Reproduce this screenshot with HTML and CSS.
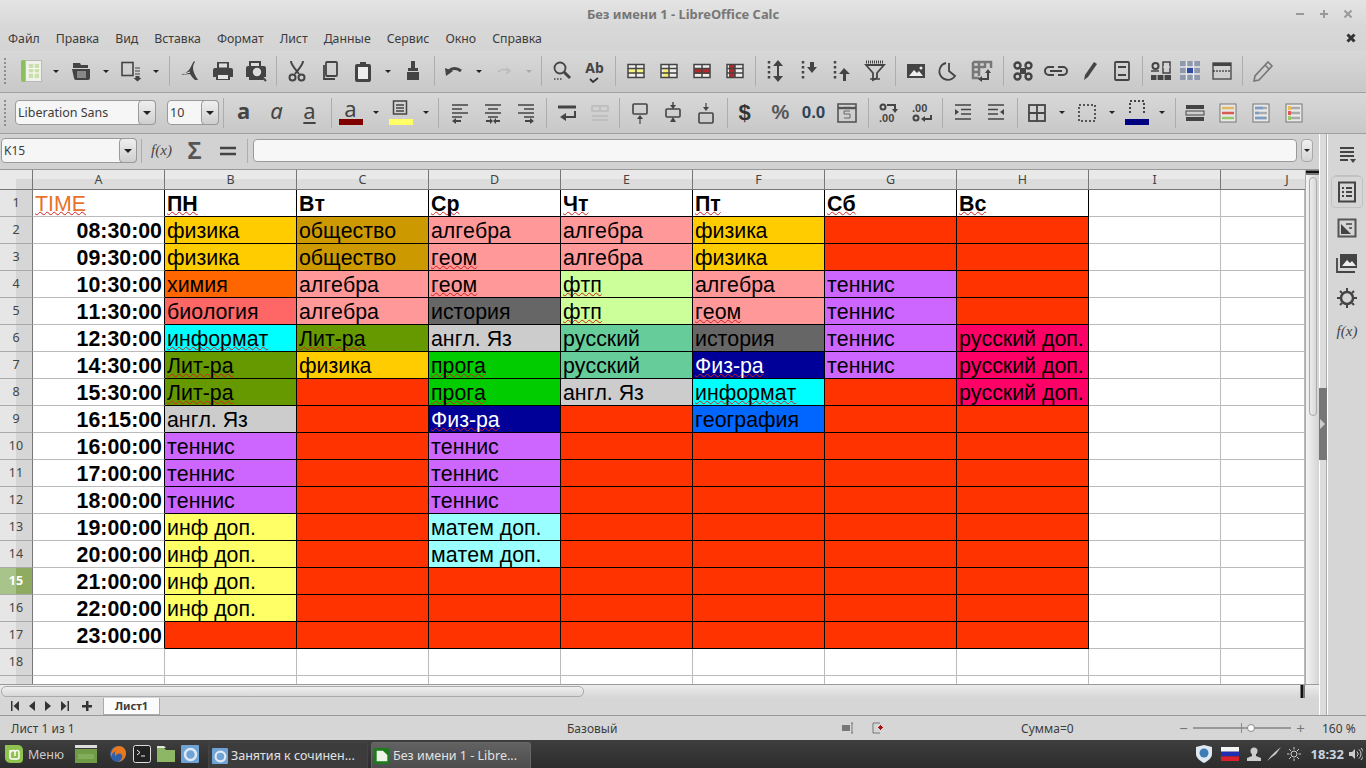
FILE: index.html
```html
<!DOCTYPE html>
<html lang="ru">
<head>
    <meta charset="UTF-8">
    <title>Без имени 1 - LibreOffice Calc</title>
    <link rel="stylesheet" href="styles.css">
</head>
<body>
    <div class="titlebar">
        <span class="title">Без имени 1 - LibreOffice Calc</span>
        <div class="winbtns">
            <svg class="wb" viewBox="0 0 10 10"><path d="M1 5h8"/></svg>
            <svg class="wb" viewBox="0 0 10 10"><path d="M1 5h8M5 1v8"/></svg>
            <svg class="wb" viewBox="0 0 10 10"><path d="M1.5 1.5l7 7M8.5 1.5l-7 7"/></svg>
        </div>
    </div>

    <div class="menubar">
        <span>Файл</span><span>Правка</span><span>Вид</span><span>Вставка</span><span>Формат</span><span>Лист</span><span>Данные</span><span>Сервис</span><span>Окно</span><span>Справка</span>
        <svg class="doc-close" viewBox="0 0 10 10"><path d="M1.5 1.5l7 7M8.5 1.5l-7 7"/></svg>
    </div>

    <!-- standard toolbar -->
    <div class="toolbar">
        <i class="grip"></i>
        <b class="b"><svg class="ic" viewBox="0 0 22 22"><path d="M1 2a2 2 0 0 1 2-2h5v22H3a2 2 0 0 1-2-2z" fill="#8cc05c" stroke="none"/><rect x="5.5" y=".5" width="16" height="21" fill="#f1f1ec" stroke="#b9b9b9" stroke-width="1"/><rect x="9" y="4" width="10" height="14" fill="#c9e0ab" stroke="none"/><path d="M9 8.5h10M9 13h10M14 4v14" stroke="#fff" stroke-width="1"/></svg></b>
        <b class="dd"></b>
        <b class="b"><svg class="ic" viewBox="0 0 22 22"><path class="f" d="M3 3h7l1 2h7v3H3z"/><path class="f" d="M2 9h18v9a2 2 0 0 1-2 2H6a2 2 0 0 1-2-2z"/><rect x="7" y="11" width="9" height="7" fill="#888" stroke="none"/></svg></b>
        <b class="dd"></b>
        <b class="b"><svg class="ic" viewBox="0 0 22 22"><rect x="2" y="2.500" width="11" height="13" stroke-width="1.600"/><path d="M15 8h5M15 11h5M15 14h5" stroke-width="1.200"/><path class="f" d="M15.500 16h4v2h2l-4 3.500-4-3.500h2z"/></svg></b>
        <b class="dd"></b>
        <i class="s l5"></i>
        <b class="b"><svg class="ic" viewBox="0 0 22 22"><path class="f" d="M15 1l1 1c-3 4-3 9 3 18h-3c-2-2-3-3-5-6l-9 1c3-1 6-3 8-5 2-3 3-6 5-9z"/><path d="M11 12l-6 2" stroke="#ddd" stroke-width="1"/></svg></b>
        <b class="b"><svg class="ic" viewBox="0 0 22 22"><path class="f" d="M5 2h12v6H5z"/><rect x="7" y="3.500" width="8" height="4" fill="#ddd" stroke="none"/><path class="f" d="M3 8h16a2 2 0 0 1 2 2v7h-3v3H4v-3H1v-7a2 2 0 0 1 2-2z"/><rect x="6" y="15" width="10" height="4" fill="#e5e5e5" stroke="none"/></svg></b>
        <b class="b"><svg class="ic" viewBox="0 0 22 22"><path class="f" d="M4 1h12v5h3a2 2 0 0 1 2 2v9h-3v3H4v-3H1V8a2 2 0 0 1 2-2h1z"/><rect x="6" y="3" width="8" height="3" fill="#ddd" stroke="none"/><circle cx="12" cy="12" r="5" fill="#ddd" stroke="#444" stroke-width="1.600"/><path d="M16 16l5 5" stroke-width="2"/></svg></b>
        <i class="s"></i>
        <b class="b"><svg class="ic" viewBox="0 0 22 22"><path d="M5 1c0 4 5 9 8 13M17 1c0 4-5 9-8 13" stroke-width="2"/><circle cx="6.500" cy="17.500" r="3" stroke-width="2"/><circle cx="15.500" cy="17.500" r="3" stroke-width="2"/></svg></b>
        <b class="b"><svg class="ic" viewBox="0 0 22 22"><rect x="7" y="2" width="11" height="14" rx="1" stroke-width="1.800"/><path d="M5 5v14h11" stroke-width="1.800"/></svg></b>
        <b class="b"><svg class="ic" viewBox="0 0 22 22"><path class="f" d="M5 4h3V2h6v2h3a2 2 0 0 1 2 2v14a2 2 0 0 1-2 2H5a2 2 0 0 1-2-2V6a2 2 0 0 1 2-2z"/><rect x="6" y="7" width="10" height="12" fill="#eee" stroke="none"/></svg></b>
        <b class="dd"></b>
        <b class="b"><svg class="ic" viewBox="0 0 22 22"><path class="f" d="M9 1h4v7h3v3H6V8h3zM5 12h12v8H5z"/></svg></b>
        <i class="s l5 r2"></i>
        <b class="b"><svg class="ic" viewBox="0 0 22 22"><path d="M5 13c2-5 8-6 13-2" stroke-width="3"/><path class="f" d="M2 8l8 3-7 5z"/></svg></b>
        <b class="dd"></b>
        <b class="b"><svg class="ic off" viewBox="0 0 22 22"><path d="M5 12c3-3 7-3 10-1M13 8l4 3-4 3" stroke-width="1.500"/></svg></b>
        <b class="dd dd-off"></b>
        <i class="s"></i>
        <b class="b"><svg class="ic" viewBox="0 0 22 22"><circle cx="9" cy="8" r="5.500" stroke-width="1.800"/><path d="M13 12l6 6" stroke-width="3"/><path d="M3 19h8" stroke-width="1.500" stroke-dasharray="1.500 1.500"/></svg></b>
        <b class="b tx"><span class="ab">Ab</span><svg class="check" viewBox="0 0 10 6"><path d="M1 2l3 3 5-4"/></svg></b>
        <i class="s"></i>
        <b class="b"><svg class="ic" viewBox="0 0 22 22"><rect x="3" y="4" width="16" height="14" fill="#eee" stroke="none"/><rect x="3" y="8" width="16" height="6" fill="#f7f28a" stroke="none"/><path d="M3 4.500h16v13H3zM3 8.500h16M3 13h16M11 4.500v13" stroke-width="1.500"/></svg></b>
        <b class="b"><svg class="ic" viewBox="0 0 22 22"><rect x="3" y="4" width="16" height="14" fill="#eee" stroke="none"/><rect x="5" y="8" width="6" height="9" fill="#f5ee6a" stroke="none"/><path d="M3 4.500h16v13H3zM3 8.500h16M3 13h16M11 4.500v13" stroke-width="1.500"/></svg></b>
        <b class="b"><svg class="ic" viewBox="0 0 22 22"><rect x="3" y="4" width="16" height="14" fill="#eee" stroke="none"/><rect x="3" y="8" width="16" height="6" fill="#b02a2a" stroke="none"/><path d="M3 4.500h16v13H3zM3 8.500h16M3 13h16M11 4.500v13" stroke-width="1.500"/></svg></b>
        <b class="b"><svg class="ic" viewBox="0 0 22 22"><rect x="3" y="4" width="16" height="14" fill="#eee" stroke="none"/><rect x="5" y="5" width="6" height="13" fill="#b02a2a" stroke="none"/><path d="M3 4.500h16v13H3zM3 8.500h16M3 13h16M11 4.500v13" stroke-width="1.500"/></svg></b>
        <i class="s"></i>
        <b class="b"><svg class="ic" viewBox="0 0 22 22"><path d="M4 1v20" stroke-width="2.500" stroke-dasharray="2.500 2.500"/><path d="M13 5v12" stroke-width="2"/><path class="f" d="M13 0l5 6H8zM13 22l5-6H8z"/></svg></b>
        <b class="b"><svg class="ic" viewBox="0 0 22 22"><path d="M5 1v20" stroke-width="2.500" stroke-dasharray="2.500 2.500"/><path class="f" d="M12 2h4v5h3l-5 6-5-6h3z"/></svg></b>
        <b class="b"><svg class="ic" viewBox="0 0 22 22"><path d="M4 1v20" stroke-width="2.500" stroke-dasharray="2.500 2.500"/><path class="f" d="M13 8l6 6h-4v7h-3v-7H8z"/></svg></b>
        <b class="b"><svg class="ic" viewBox="0 0 22 22"><path d="M2 2h18" stroke-width="3" stroke-dasharray="1 1"/><path d="M2 5h18L13 13v5l-4 2v-7z" stroke-width="1.800"/><path d="M6 19h10" stroke-width="1.500"/></svg></b>
        <i class="s"></i>
        <b class="b"><svg class="ic" viewBox="0 0 22 22"><rect x="2" y="4" width="18" height="14" class="f"/><path d="M4 16l5-6 3 3 2-2 4 5z" fill="#eee" stroke="none"/><circle cx="16" cy="8" r="1.500" fill="#eee" stroke="none"/></svg></b>
        <b class="b"><svg class="ic" viewBox="0 0 22 22"><path d="M11 3v8l6 5A8.500 8.500 0 1 1 8 3" stroke-width="1.800"/></svg></b>
        <b class="b"><svg class="ic" viewBox="0 0 22 22"><path d="M2 2h18v6M2 2v16h6M2 7h12M2 12h6M8 2v14M14 2v6" stroke-width="2.500" stroke="#777"/><path d="M17 9l-3 4h2v5h-5v-2l-4 3 4 3v-2h7v-7h2z" class="f"/></svg></b>
        <i class="s l5 r2"></i>
        <b class="b"><svg class="ic" viewBox="0 0 22 22"><circle cx="5.500" cy="5.500" r="3" stroke-width="2.400"/><circle cx="16.500" cy="5.500" r="3" stroke-width="2.400"/><circle cx="5.500" cy="16.500" r="3" stroke-width="2.400"/><circle cx="16.500" cy="16.500" r="3" stroke-width="2.400"/><path class="f" d="M8 8h6v6H8z"/></svg></b>
        <b class="b"><svg class="ic" viewBox="0 0 22 22"><path d="M9 7H4a4 4 0 0 0 0 8h5M13 7h5a4 4 0 0 1 0 8h-5M5 11h12" stroke-width="2"/></svg></b>
        <b class="b"><svg class="ic" viewBox="0 0 22 22"><path class="f" d="M16 2l3 2-9 13-4 3 1-5z"/></svg></b>
        <b class="b"><svg class="ic" viewBox="0 0 22 22"><rect x="4" y="2" width="14" height="18" rx="1" stroke-width="1.800"/><path d="M7 7h8M7 15h8" stroke-width="1.800"/></svg></b>
        <i class="s"></i>
        <b class="b b-n"><svg class="ic" viewBox="0 0 22 22"><circle cx="5.500" cy="6" r="3" stroke-width="2"/><path d="M1 11h8M13 2h7v11h-7z" stroke-width="1.500"/><path d="M1 15h20v5H1z" class="f"/><path d="M7 15v5M14 15v5M13 7h7" stroke="#ddd" stroke-width="1"/></svg></b>
        <b class="b b-m"><svg class="ic" viewBox="0 0 22 22"><rect x="1" y="1" width="20" height="19" fill="#8f98ad" stroke="none"/><path d="M1 7h20M1 14h20M7.500 1v19M14.500 1v19" stroke="#e8e8e8" stroke-width="1.500"/><rect x="8" y="8" width="6" height="5" fill="#2f49a8" stroke="none"/></svg></b>
        <b class="b"><svg class="ic" viewBox="0 0 22 22"><rect x="2" y="3" width="18" height="16" stroke="#555" stroke-width="1.500"/><rect x="2" y="3" width="18" height="3" class="f"/><path d="M2 11h18" stroke="#111" stroke-width="1.200" stroke-dasharray="2 1"/></svg></b>
        <i class="s"></i>
        <b class="b"><svg class="ic" viewBox="0 0 22 22"><path d="M16 2l4 4L7 20l-5 1 1-5zM13 5l4 4" stroke="#777" stroke-width="1.600"/></svg></b>
    </div>

    <!-- formatting toolbar -->
    <div class="toolbar">
        <i class="grip grip2"></i>
        <div class="combo combo-font"><span class="combo-val">Liberation Sans</span><b class="combo-btn"></b></div>
        <div class="combo combo-size"><span class="combo-val">10</span><b class="combo-btn"></b></div>
        <i class="s"></i>
        <b class="b tx"><span class="ltr ltr-b">a</span></b>
        <b class="b tx"><span class="ltr ltr-i">a</span></b>
        <b class="b tx"><span class="ltr ltr-u">a</span></b>
        <i class="s l5 r2"></i>
        <b class="b tx bar"><span class="ltr ltr-c">a</span><i class="swatch sw-red"></i></b>
        <b class="dd"></b>
        <b class="b bar"><svg class="ic ic-bg" viewBox="0 0 18 18"><rect x="1.500" y="1" width="13" height="13" stroke-width="1.500"/><path d="M4 5h8M4 8h8M4 11h8" stroke-width="1.500"/></svg><i class="swatch sw-yellow"></i></b>
        <b class="dd"></b>
        <i class="s r4"></i>
        <b class="b"><svg class="ic" viewBox="0 0 22 22"><path d="M3 3h16M3 7h10M3 11h16M3 15h10" stroke-width="1.600"/><path class="f" d="M3 19l4-3v2h5v2H7v2z"/></svg></b>
        <b class="b"><svg class="ic" viewBox="0 0 22 22"><path d="M3 3h16M6 7h10M3 11h16M6 15h10" stroke-width="1.600"/><path class="f" d="M11 19l-3-3v2H4v2h4v2zM11 19l3-3v2h4v2h-4v2z"/></svg></b>
        <b class="b"><svg class="ic" viewBox="0 0 22 22"><path d="M3 3h16M9 7h10M3 11h16M9 15h10" stroke-width="1.600"/><path class="f" d="M19 19l-4-3v2h-5v2h5v2z"/></svg></b>
        <i class="s"></i>
        <b class="b"><svg class="ic" viewBox="0 0 22 22"><path d="M2 5h18" stroke-width="3"/><path d="M19 9v6H9" stroke-width="2"/><path class="f" d="M10 11v8l-6-4z"/></svg></b>
        <b class="b"><svg class="ic off" viewBox="0 0 22 22"><path d="M3 4h16v5H3zM3 14h16M3 18h16M11 4v5" stroke-width="1.500"/></svg></b>
        <i class="s l3"></i>
        <b class="b"><svg class="ic" viewBox="0 0 22 22"><rect x="4" y="2" width="14" height="10" rx="1" stroke-width="1.600"/><path d="M11 15v7" stroke-width="1.200"/><path class="f" d="M11 13l3 4H8z"/></svg></b>
        <b class="b"><svg class="ic" viewBox="0 0 22 22"><rect x="4" y="7" width="14" height="8" rx="1" stroke-width="1.600"/><path class="f" d="M11 7L8 3h6zM11 15l3 5H8z"/><path d="M11 0v4" stroke-width="1.400"/></svg></b>
        <b class="b"><svg class="ic" viewBox="0 0 22 22"><rect x="4" y="11" width="14" height="10" rx="1" stroke-width="1.600"/><path d="M11 1v6" stroke-width="1.200"/><path class="f" d="M11 9L8 5h6z"/></svg></b>
        <i class="s l5"></i>
        <b class="b tx nudge"><span class="num dollar">$</span></b>
        <b class="b tx"><span class="num pct">%</span></b>
        <b class="b tx"><span class="num dec">0.0</span></b>
        <b class="b"><svg class="ic" viewBox="0 0 22 22"><rect x="2" y="2" width="18" height="18" stroke="#555" stroke-width="1.600"/><path d="M2 6h18" stroke="#555" stroke-width="2.500"/><path d="M5 4h2M15 4h2" stroke="#ddd" stroke-width="1"/><path d="M14 9h-6v3h6v4H8" stroke="#666" stroke-width="1"/></svg></b>
        <i class="s l5"></i>
        <b class="b"><svg class="ic" viewBox="0 0 22 22"><circle cx="5" cy="5" r="2.500" stroke-width="2"/><path d="M9 3h8v5" stroke-width="2"/><path class="f" d="M17 11l-3-4h6z"/><text class="mini" x="1" y="20">.00</text></svg></b>
        <b class="b"><svg class="ic" viewBox="0 0 22 22"><text class="mini" x="1" y="10">.00</text><circle cx="5" cy="16" r="2.500" stroke-width="2"/><path d="M20 13v4h-8" stroke-width="2"/><path class="f" d="M10 17l4-3v6z"/></svg></b>
        <i class="s"></i>
        <b class="b"><svg class="ic" viewBox="0 0 22 22"><path d="M3 3h16M9 7.500h10M9 12h10M3 17h16" stroke-width="1.600"/><path class="f" d="M7 10l-4-3v6z"/></svg></b>
        <b class="b"><svg class="ic" viewBox="0 0 22 22"><path d="M3 3h16M3 7.500h10M3 12h10M3 17h16" stroke-width="1.600"/><path class="f" d="M15 10l4-3v6z"/></svg></b>
        <i class="s l5 r2"></i>
        <b class="b"><svg class="ic" viewBox="0 0 22 22"><rect x="3" y="3" width="16" height="16" stroke-width="1.800"/><path d="M3 11h16M11 3v16" stroke-width="1.800"/></svg></b>
        <b class="dd"></b>
        <b class="b"><svg class="ic" viewBox="0 0 22 22"><rect x="3" y="3" width="16" height="16" stroke="#555" stroke-width="2" stroke-dasharray="2 2"/></svg></b>
        <b class="dd"></b>
        <b class="b bar"><svg class="ic ic-bg" viewBox="0 0 18 18"><path d="M2 13V1h14v12" stroke="#444" stroke-width="2" stroke-dasharray="2 2"/></svg><i class="swatch sw-navy"></i></b>
        <b class="dd"></b>
        <i class="s l5 r2"></i>
        <b class="b"><svg class="ic" viewBox="0 0 22 22"><rect x="2" y="3" width="18" height="4" class="f"/><rect x="2" y="9" width="18" height="4" stroke-width="1"/><rect x="2" y="15" width="18" height="4" class="f"/></svg></b>
        <b class="b"><svg class="ic" viewBox="0 0 22 22"><rect x="3" y="2" width="16" height="18" fill="#e8e8e8" stroke="#777" stroke-width="1"/><path d="M5 6h12" stroke="#e2b860" stroke-width="2.500"/><path d="M5 11h12" stroke="#d85a50" stroke-width="2.500"/><path d="M5 16h12" stroke="#98c868" stroke-width="2.500"/></svg></b>
        <b class="b"><svg class="ic" viewBox="0 0 22 22"><rect x="3" y="2" width="16" height="18" fill="#e8e8e8" stroke="#777" stroke-width="1"/><path d="M5 6h12M5 11h12M5 16h12" stroke="#aaa" stroke-width="2.500"/><path d="M5 6h8M5 11h4M5 16h11" stroke="#7b9cc4" stroke-width="2.500"/></svg></b>
        <b class="b"><svg class="ic" viewBox="0 0 22 22"><rect x="3" y="2" width="16" height="18" fill="#e8e8e8" stroke="#777" stroke-width="1"/><path d="M8 6h9M8 11h9M8 16h9" stroke="#aaa" stroke-width="2.500"/><path d="M5 4h3v4H5z" fill="#eebb55" stroke="none"/><path d="M5 9h3v4H5z" fill="#d85a50" stroke="none"/><path d="M5 14h3v4H5z" fill="#98c868" stroke="none"/></svg></b>
    </div>

    <div class="main">
        <div class="leftcol">
            <div class="formulabar">
                <div class="combo combo-name"><span class="combo-val">K15</span><b class="combo-btn"></b></div>
                <i class="s s-name"></i>
                <b class="b tx"><span class="fx">f(x)</span></b>
                <b class="b tx"><span class="sigma">Σ</span></b>
                <b class="b tx"><svg class="ic" viewBox="0 0 22 22"><path d="M3 8h16M3 14h16" stroke-width="2.500"/></svg></b>
                <i class="s s-fx"></i>
                <div class="formula-input"></div>
                <b class="formula-dd"></b>
            </div>

            <div class="gridrow">
                <div class="gridwrap">
                    <table class="sheet">
                        <colgroup>
                            <col class="c-hdr"><col class="c-w"><col class="c-w"><col class="c-w"><col class="c-w"><col class="c-w"><col class="c-w"><col class="c-w"><col class="c-w"><col class="c-w"><col class="c-j">
                        </colgroup>
                        <thead>
                            <tr><th class="corner"></th><th>A</th><th>B</th><th>C</th><th>D</th><th>E</th><th>F</th><th>G</th><th>H</th><th>I</th><th class="col-j">J</th></tr>
                        </thead>
                        <tbody>
                            <tr class="top"><th>1</th><td class="a time"><u>TIME</u></td><td class="h"><u>ПН</u></td><td class="h">Вт</td><td class="h"><u>Ср</u></td><td class="h"><u>Чт</u></td><td class="h"><u>Пт</u></td><td class="h"><u>Сб</u></td><td class="h last"><u>Вс</u></td><td></td><td></td></tr>
                            <tr><th>2</th><td class="a t">08:30:00</td><td class="c fiz">физика</td><td class="c obs">общество</td><td class="c alg">алгебра</td><td class="c alg">алгебра</td><td class="c fiz">физика</td><td class="c red"></td><td class="c red"></td><td></td><td></td></tr>
                            <tr><th>3</th><td class="a t">09:30:00</td><td class="c fiz">физика</td><td class="c obs">общество</td><td class="c alg"><u>геом</u></td><td class="c alg">алгебра</td><td class="c fiz">физика</td><td class="c red"></td><td class="c red"></td><td></td><td></td></tr>
                            <tr><th>4</th><td class="a t">10:30:00</td><td class="c him">химия</td><td class="c alg">алгебра</td><td class="c alg"><u>геом</u></td><td class="c ftp"><u>фтп</u></td><td class="c alg">алгебра</td><td class="c ten">теннис</td><td class="c red"></td><td></td><td></td></tr>
                            <tr><th>5</th><td class="a t">11:30:00</td><td class="c bio">биология</td><td class="c alg">алгебра</td><td class="c ist">история</td><td class="c ftp"><u>фтп</u></td><td class="c alg"><u>геом</u></td><td class="c ten">теннис</td><td class="c red"></td><td></td><td></td></tr>
                            <tr><th>6</th><td class="a t">12:30:00</td><td class="c inf"><u>информат</u></td><td class="c lit"><u>Лит-ра</u></td><td class="c eng">англ. Яз</td><td class="c rus">русский</td><td class="c ist">история</td><td class="c ten">теннис</td><td class="c rud">русский доп.</td><td></td><td></td></tr>
                            <tr><th>7</th><td class="a t">14:30:00</td><td class="c lit"><u>Лит-ра</u></td><td class="c fiz">физика</td><td class="c pro"><u>прога</u></td><td class="c rus">русский</td><td class="c phy"><u>Физ-ра</u></td><td class="c ten">теннис</td><td class="c rud">русский доп.</td><td></td><td></td></tr>
                            <tr><th>8</th><td class="a t">15:30:00</td><td class="c lit"><u>Лит-ра</u></td><td class="c red"></td><td class="c pro"><u>прога</u></td><td class="c eng">англ. Яз</td><td class="c inf"><u>информат</u></td><td class="c red"></td><td class="c rud">русский доп.</td><td></td><td></td></tr>
                            <tr><th>9</th><td class="a t">16:15:00</td><td class="c eng">англ. Яз</td><td class="c red"></td><td class="c phy"><u>Физ-ра</u></td><td class="c red"></td><td class="c geo">география</td><td class="c red"></td><td class="c red"></td><td></td><td></td></tr>
                            <tr><th>10</th><td class="a t">16:00:00</td><td class="c ten">теннис</td><td class="c red"></td><td class="c ten">теннис</td><td class="c red"></td><td class="c red"></td><td class="c red"></td><td class="c red"></td><td></td><td></td></tr>
                            <tr><th>11</th><td class="a t">17:00:00</td><td class="c ten">теннис</td><td class="c red"></td><td class="c ten">теннис</td><td class="c red"></td><td class="c red"></td><td class="c red"></td><td class="c red"></td><td></td><td></td></tr>
                            <tr><th>12</th><td class="a t">18:00:00</td><td class="c ten">теннис</td><td class="c red"></td><td class="c ten">теннис</td><td class="c red"></td><td class="c red"></td><td class="c red"></td><td class="c red"></td><td></td><td></td></tr>
                            <tr><th>13</th><td class="a t">19:00:00</td><td class="c idp">инф доп.</td><td class="c red"></td><td class="c mat">матем доп.</td><td class="c red"></td><td class="c red"></td><td class="c red"></td><td class="c red"></td><td></td><td></td></tr>
                            <tr><th>14</th><td class="a t">20:00:00</td><td class="c idp">инф доп.</td><td class="c red"></td><td class="c mat">матем доп.</td><td class="c red"></td><td class="c red"></td><td class="c red"></td><td class="c red"></td><td></td><td></td></tr>
                            <tr><th class="sel">15</th><td class="a t">21:00:00</td><td class="c idp">инф доп.</td><td class="c red"></td><td class="c red"></td><td class="c red"></td><td class="c red"></td><td class="c red"></td><td class="c red"></td><td></td><td></td></tr>
                            <tr><th>16</th><td class="a t">22:00:00</td><td class="c idp">инф доп.</td><td class="c red"></td><td class="c red"></td><td class="c red"></td><td class="c red"></td><td class="c red"></td><td class="c red"></td><td></td><td></td></tr>
                            <tr><th>17</th><td class="a t">23:00:00</td><td class="c red"></td><td class="c red"></td><td class="c red"></td><td class="c red"></td><td class="c red"></td><td class="c red"></td><td class="c red"></td><td></td><td></td></tr>
                            <tr><th>18</th><td></td><td></td><td></td><td></td><td></td><td></td><td></td><td></td><td></td><td></td></tr>
                            <tr><th></th><td></td><td></td><td></td><td></td><td></td><td></td><td></td><td></td><td></td><td></td></tr>
                        </tbody>
                    </table>
                </div>
                <div class="vscroll">
                    <div class="vhandle"></div>
                    <div class="vthumb"></div>
                </div>
            </div>

            <div class="hscroll">
                <div class="hthumb"></div>
                <div class="htrack"></div>
                <div class="hhandle"></div>
            </div>

            <div class="tabsbar">
                <div class="tabnav">
                    <svg class="nav" viewBox="0 0 10 10"><path d="M1 0h1.500v10H1zM9 0v10L3.500 5z"/></svg>
                    <svg class="nav" viewBox="0 0 10 10"><path d="M8 0v10L2 5z"/></svg>
                    <svg class="nav" viewBox="0 0 10 10"><path d="M2 0v10l6-5z"/></svg>
                    <svg class="nav" viewBox="0 0 10 10"><path d="M9 0H7.500v10H9zM1 0v10l5.500-5z"/></svg>
                    <svg class="nav nav-add" viewBox="0 0 10 10"><path d="M4 0h2.500v4H10v2.500H6.500V10H4V6.500H0V4h4z"/></svg>
                </div>
                <div class="tab">Лист1</div>
            </div>
        </div>

        <div class="splitter"><div class="split-grip"></div></div>

        <div class="sidebar">
            <svg class="ic side-ic" viewBox="0 0 22 22"><path d="M4 4h14M4 8h14M4 12h14M4 16h8" stroke-width="1.800"/><path class="f" d="M14 15h6l-3 4z"/></svg>
            <div class="side-sep"></div>
            <div class="side-active"><svg class="ic" viewBox="0 0 22 22"><rect x="3" y="1.500" width="16" height="19" stroke-width="2"/><path d="M6 7h2M10 7h6M6 11h2M10 11h6M6 15h2M10 15h6" stroke-width="1.800"/></svg></div>
            <svg class="ic side-ic" viewBox="0 0 22 22"><rect x="2.500" y="2.500" width="17" height="17" stroke="#555" stroke-width="2"/><path class="f" d="M5 7l10 10H5z"/><path d="M10 7h6M13 11h3" stroke-width="1.600"/></svg>
            <svg class="ic side-ic" viewBox="0 0 22 22"><path d="M1 6v14h18" stroke-width="1.800"/><rect x="4" y="2" width="17" height="14" class="f"/><path d="M6 14l5-6 3 3 2-2 4 5z" fill="#eee" stroke="none"/></svg>
            <svg class="ic side-ic" viewBox="0 0 22 22"><circle cx="11" cy="11" r="6" stroke-width="2.500"/><path d="M11 1v3M11 18v3M1 11h3M18 11h3M4 4l2 2M16 16l2 2M18 4l-2 2M4 18l2-2" stroke-width="2"/></svg>
            <span class="fx side-fx">f(x)</span>
        </div>
    </div>

    <div class="statusbar">
        <span class="st st-sheet">Лист 1 из 1</span>
        <span class="st st-style">Базовый</span>
        <span class="st st-icons">
            <svg class="st-ic" viewBox="0 0 12 12"><rect x="0" y="3" width="8" height="6" fill="#777"/><path d="M10 1v10M9 1h2M9 11h2" stroke="#777" fill="none"/></svg>
            <svg class="st-ic" viewBox="0 0 12 12"><path d="M8 1H1v10h7" stroke="#777" fill="none"/><path d="M6 5.500h5M8.500 3v5M7 4l3 3M10 4L7 7" stroke="#a11" fill="none"/></svg>
        </span>
        <span class="st st-sum">Сумма=0</span>
        <span class="st st-zoom">
            <i class="zm">−</i>
            <span class="slider"><i class="tick"></i><i class="knob"></i></span>
            <i class="zm">+</i>
        </span>
        <span class="st st-pct">160 %</span>
    </div>

    <div class="taskbar">
        <div class="mint">
            <svg class="tk" viewBox="0 0 20 20"><path d="M1 1h13a5 5 0 0 1 5 5v9a4 4 0 0 1-4 4H6a5 5 0 0 1-5-5z" fill="#8fc24f"/><path d="M6 6v7a2 2 0 0 0 2 2h5a2 2 0 0 0 2-2V8.500a2 2 0 0 0-4 0V12M11 8.500a2 2 0 0 0-4 0" stroke="#fff" stroke-width="1.500" fill="none"/></svg>
            <span>Меню</span>
        </div>
        <svg class="tk tk-desk" viewBox="0 0 22 18"><rect x="0" y="0" width="22" height="3" fill="#ddd"/><rect x="0" y="4" width="22" height="14" fill="#6f9c45"/><rect x="3" y="9" width="16" height="5" fill="#83ad5a"/></svg>
        <svg class="tk tk-q" viewBox="0 0 18 18"><circle cx="9" cy="9" r="8" fill="#2f5fa8"/><path d="M2 12C1 6 5 1 10 1c4 0 7 3 7 7 0 6-5 9-9 9 4-1 6-4 5-7-2-3-6-1-6 1-2-1-1-4 0-5-3 1-4 3-5 6z" fill="#e8791d"/></svg>
        <svg class="tk tk-q" viewBox="0 0 18 18"><rect x=".5" y=".5" width="17" height="17" rx="2" fill="#222" stroke="#ddd"/><path d="M4 5l3 2.500L4 10M8 11h4" stroke="#eee" fill="none"/></svg>
        <svg class="tk tk-q" viewBox="0 0 18 18"><path d="M0 3h7l2 2h9v12H0z" fill="#8db665"/><path d="M0 1h7l2 2H0z" fill="#dfe8d5"/></svg>
        <svg class="tk tk-q" viewBox="0 0 18 18"><rect width="18" height="18" rx="1" fill="#6fa3d6"/><circle cx="9.500" cy="9.500" r="5.500" fill="none" stroke="#dfe9f3" stroke-width="2.500"/></svg>
        <div class="task">
            <svg class="tk" viewBox="0 0 18 18"><rect width="18" height="18" rx="1" fill="#6fa3d6"/><circle cx="9.500" cy="9.500" r="5.500" fill="none" stroke="#dfe9f3" stroke-width="2.500"/></svg>
            <span>Занятия к сочинен...</span>
        </div>
        <div class="task task-on">
            <svg class="tk" viewBox="0 0 18 18"><rect width="18" height="18" rx="2" fill="#1d7a1d"/><path d="M3 3h7l5 5v7H3z" fill="#eef5e8"/></svg>
            <span>Без имени 1 - Libre...</span>
        </div>
        <div class="tray">
            <svg class="tk tk-shield" viewBox="0 0 16 18"><path d="M8 0l8 2v7c0 4-4 7-8 9-4-2-8-5-8-9V2z" fill="#dfe9f2"/><circle cx="8" cy="8" r="4.500" fill="#3e7cb8"/></svg>
            <svg class="tk tk-flag" viewBox="0 0 18 14"><rect width="18" height="4.700" fill="#f4f4f4"/><rect y="4.700" width="18" height="4.700" fill="#1f2fb0"/><rect y="9.400" width="18" height="4.600" fill="#d9202c"/></svg>
            <svg class="tk tk-user" viewBox="0 0 14 14"><circle cx="7" cy="4" r="3.500" fill="#ccc"/><path d="M5 7h4v2l5 2v3H0v-3l5-2z" fill="#ccc"/></svg>
            <svg class="tk tk-user" viewBox="0 0 14 14"><path d="M14 0L8 5 4 9l1 1 4-3zM4 9l-4 5 5-4" fill="#ccc"/></svg>
            <svg class="tk tk-user" viewBox="0 0 14 14"><circle cx="7" cy="7" r="3" fill="none" stroke="#ccc"/><path d="M7 0v2.500M7 11.500V14M0 7h2.500M11.500 7H14M2 2l2 2M10 10l2 2M12 2l-2 2M2 12l2-2" stroke="#ccc"/></svg>
            <span class="clock">18:32</span>
            <svg class="tk tk-vol" viewBox="0 0 14 14"><path d="M0 5h3l3-3v10L3 9H0z" fill="#ccc"/><path d="M8 4.500a3.500 3.500 0 0 1 0 5M10 2.500a6 6 0 0 1 0 9M12 1a8 8 0 0 1 0 12" stroke="#ccc" fill="none"/></svg>
        </div>
    </div>
</body>
</html>
```

FILE: styles.css
```css
* {
    box-sizing: border-box;
}
html, body {
    margin: 0;
    padding: 0;
}
body {
    width: 1366px;
    height: 768px;
    overflow: hidden;
    display: flex;
    flex-direction: column;
    font-family: "Noto Sans", sans-serif;
    font-size: 12px;
    color: #3c3c3c;
    background-color: #d6d6d6;
}
i, b {
    font-style: normal;
    font-weight: normal;
}

/* title and menu */
.titlebar {
    height: 26px;
    display: flex;
    align-items: center;
    justify-content: center;
    position: relative;
    background: linear-gradient(#e4e4e4, #d8d8d8);
}
.title {
    font-weight: bold;
    font-size: 12.900px;
    color: #777;
    margin-top: 2px;
}
.winbtns {
    position: absolute;
    right: 13px;
    top: 9px;
    display: flex;
    gap: 14px;
}
.wb {
    width: 10px;
    height: 10px;
    fill: none;
    stroke: #999;
    stroke-width: 2;
}
.menubar {
    height: 25px;
    display: flex;
    align-items: center;
    gap: 16px;
    padding-left: 8px;
    background: linear-gradient(#d8d8d8, #d4d4d4);
    font-size: 12.300px;
}
.doc-close {
    width: 10px;
    height: 10px;
    margin-left: auto;
    margin-right: 10px;
    fill: none;
    stroke: #333;
    stroke-width: 3;
}

/* toolbars */
.toolbar {
    height: 41px;
    display: flex;
    align-items: center;
    padding-left: 4px;
    border-bottom: 1px solid #a0a0a0;
    background: linear-gradient(#d8d8d8, #c8c8c8);
}
.toolbar:nth-of-type(3) {
    height: 42px;
}
.grip {
    width: 2px;
    height: 26px;
    margin-right: 8px;
    border-left: 2px dotted #8e8e8e;
}
.grip2 {
    margin-right: 9px;
}
.b {
    flex: none;
    width: 33px;
    height: 28px;
    display: flex;
    align-items: center;
    justify-content: center;
    position: relative;
}
.b-n {
    width: 29px;
}
.b-m {
    width: 30px;
}
.dd {
    flex: none;
    width: 17px;
    height: 28px;
    display: flex;
    align-items: center;
    justify-content: center;
}
.dd::after {
    content: "";
    border-left: 3px solid transparent;
    border-right: 3px solid transparent;
    border-top: 3px solid #222;
}
.dd-off::after {
    border-top-color: #aaa;
}
.s {
    flex: none;
    width: 1px;
    height: 30px;
    margin: 0 3px 0 4px;
    background-color: #adadad;
}
.l3 {
    margin-left: 3px;
}
.l5 {
    margin-left: 5px;
}
.r2 {
    margin-right: 2px;
}
.r4 {
    margin-right: 4px;
}
.ic {
    width: 22px;
    height: 22px;
    fill: none;
    stroke: #444;
    stroke-width: 1.5;
    overflow: visible;
}
.f {
    fill: #444;
    stroke: none;
}
.off {
    stroke: #bbb;
}
.mini {
    font-family: "Liberation Sans", sans-serif;
    font-weight: bold;
    font-size: 11px;
    fill: #444;
    stroke: none;
}
.ab {
    font-weight: bold;
    font-size: 14px;
    color: #444;
    line-height: 14px;
    margin-top: -6px;
}
.check {
    position: absolute;
    left: 11px;
    bottom: 2px;
    width: 10px;
    height: 6px;
    fill: none;
    stroke: #333;
    stroke-width: 1.800;
}
.ltr {
    font-size: 22px;
    line-height: 22px;
    color: #444;
    margin-top: -5px;
}
.ltr-b {
    font-weight: bold;
}
.ltr-i {
    font-style: italic;
}
.ltr-u {
    text-decoration: underline;
    text-underline-offset: 3px;
}
.ltr-c {
    margin-top: -10px;
}
.swatch {
    position: absolute;
    left: 5px;
    bottom: 2px;
    width: 24px;
    height: 6px;
}
.sw-red {
    background-color: #800000;
}
.sw-yellow {
    background-color: #ffff66;
}
.sw-navy {
    background-color: #000080;
}
.ic-bg {
    width: 18px;
    height: 18px;
    margin-top: -7px;
}
.num {
    font-family: "Liberation Sans", sans-serif;
    font-weight: bold;
    color: #444;
}
.nudge {
    padding-right: 6px;
}
.dollar {
    font-size: 22px;
    color: #333;
}
.pct {
    font-size: 20px;
    color: #555;
}
.dec {
    font-size: 17px;
    color: #2f4356;
}

/* combo boxes */
.combo {
    flex: none;
    height: 25px;
    display: flex;
    background-color: #f6f6f6;
    border: 1px solid #9a9a9a;
    border-radius: 4px;
}
.combo-val {
    flex: 1;
    padding-left: 2px;
    line-height: 24px;
    font-size: 12.500px;
    overflow: hidden;
}
.combo-btn {
    flex: none;
    width: 18px;
    margin: -1px;
    display: flex;
    align-items: center;
    justify-content: center;
    border: 1px solid #9a9a9a;
    border-radius: 4px;
    background: linear-gradient(#efefef, #cfcfcf);
}
.combo-btn::after {
    content: "";
    border-left: 4px solid transparent;
    border-right: 4px solid transparent;
    border-top: 4px solid #222;
}
.combo-font {
    width: 141px;
}
.combo-size {
    width: 52px;
    margin-left: 11px;
}
.combo-name {
    width: 136px;
    margin-left: 1px;
}
.combo-name .combo-val {
    font-size: 12px;
}

/* layout of the lower part */
.main {
    height: 582px;
    display: flex;
}
.leftcol {
    width: 1319px;
    display: flex;
    flex-direction: column;
}

/* formula bar */
.formulabar {
    height: 36px;
    flex: none;
    display: flex;
    align-items: center;
    padding-bottom: 1px;
    border-bottom: 1px solid #999;
    background-color: #d2d2d2;
}
.s-name {
    height: 24px;
    margin-left: 4px;
}
.s-fx {
    height: 24px;
    margin-left: 3px;
    margin-right: 5px;
}
.fx {
    font-family: "Liberation Serif", serif;
    font-style: italic;
    font-size: 15px;
    color: #444;
}
.sigma {
    font-family: "Liberation Sans", sans-serif;
    font-weight: bold;
    font-size: 24px;
    color: #555;
}
.formula-input {
    flex: 1;
    height: 23px;
    background-color: #f7f7f7;
    border: 1px solid #9a9a9a;
    border-radius: 4px;
}
.formula-dd {
    flex: none;
    width: 12px;
    height: 23px;
    margin: 0 6px 0 4px;
    display: flex;
    align-items: center;
    justify-content: center;
    border: 1px solid #a8a8a8;
    border-radius: 4px;
    background: linear-gradient(#f0f0f0, #d4d4d4);
}
.formula-dd::after {
    content: "";
    border-left: 3px solid transparent;
    border-right: 3px solid transparent;
    border-top: 3px solid #222;
}

/* the sheet */
.gridrow {
    height: 514px;
    flex: none;
    display: flex;
}
.gridwrap {
    width: 1305px;
    overflow: hidden;
    background-color: #fff;
}
.sheet {
    table-layout: fixed;
    width: 1305px;
    border-collapse: separate;
    border-spacing: 0;
    font-family: "Liberation Sans", sans-serif;
    font-size: 21.330px;
    font-kerning: none;
    color: #000;
}
.c-hdr {
    width: 33px;
}
.c-w {
    width: 132px;
}
.c-j {
    width: 84px;
}
.sheet th {
    font-family: "Noto Sans", sans-serif;
    font-weight: normal;
    font-size: 12.500px;
    color: #444;
    padding: 0;
    text-align: center;
}
.sheet thead th {
    height: 20px;
    line-height: 19px;
    border-right: 1px solid #777;
    border-bottom: 1px solid #777;
    background: linear-gradient(#e9e9e9 45%, #dcdcdc 45%);
}
.sheet thead .corner {
    background: linear-gradient(#e9e9e9 45%, transparent 45%), linear-gradient(to right, #e9e9e9 50%, #d8d8d8 50%);
}
.sheet thead .col-j {
    padding-left: 48px;
    border-right: 0;
}
.sheet tbody th {
    height: 27px;
    border-right: 1px solid #777;
    border-bottom: 1px solid #aaa;
    background: linear-gradient(to right, #e6e6e6 50%, #d6d6d6 50%);
}
.sheet tbody th.sel {
    color: #fff;
    font-weight: bold;
    background: linear-gradient(to right, #a9c48a 50%, #8fab62 50%);
}
.sheet td {
    height: 27px;
    padding: 2px 0 0 2px;
    white-space: nowrap;
    overflow: hidden;
    line-height: 24px;
    border-right: 1px solid #bbb;
    border-bottom: 1px solid #bbb;
}
.sheet td.a {
    border-right-color: #000;
}
.sheet td.t {
    font-weight: bold;
    text-align: right;
    padding: 2px 2px 0 0;
}
.sheet td.time {
    color: #e9722a;
}
.sheet td.h {
    font-weight: bold;
    border-right-color: #000;
    border-bottom-color: #000;
}
.sheet td.c {
    border-right-color: #000;
    border-bottom-color: #000;
}
.sheet u {
    text-decoration: underline wavy #d02020;
    text-decoration-thickness: 1px;
    text-underline-offset: 0;
    text-decoration-skip-ink: none;
}
.fiz { background-color: #ffcc00; }
.obs { background-color: #cc9900; }
.alg { background-color: #ff9999; }
.him { background-color: #ff6600; }
.bio { background-color: #ff6666; }
.inf { background-color: #00ffff; }
.lit { background-color: #669900; }
.eng { background-color: #cccccc; }
.ten { background-color: #cc66ff; }
.idp { background-color: #ffff66; }
.mat { background-color: #99ffff; }
.red { background-color: #ff3300; }
.ist { background-color: #666666; }
.rus { background-color: #66cc99; }
.ftp { background-color: #ccff99; }
.pro { background-color: #00cc00; }
.geo { background-color: #0066ff; }
.rud { background-color: #ff0066; }
.sheet td.phy {
    background-color: #000099;
    color: #fff;
}

/* scrollbars */
.vscroll {
    width: 14px;
    flex: none;
    padding: 0 2px 0 3px;
    border-left: 1px solid #aaa;
    background: linear-gradient(to right, #f4f4f4, #d4d4d4);
}
.vhandle {
    height: 5px;
    margin: 0 -3px;
    background: linear-gradient(#777 20%, #111 20%, #111 70%, #777 70%);
}
.vthumb {
    height: 239px;
    margin-top: 2px;
    background: linear-gradient(to right, #ececec, #d8d8d8);
    border: 1px solid #aaa;
    border-radius: 5px;
}
.hscroll {
    height: 14px;
    flex: none;
    display: flex;
    align-items: stretch;
    padding-right: 14px;
    border-top: 1px solid #9a9a9a;
    background: linear-gradient(#ececec, #d6d6d6);
}
.hthumb {
    width: 583px;
    margin: 1px 0 1px 1px;
    border: 1px solid #aaa;
    border-radius: 5px;
    background: linear-gradient(#efefef, #d8d8d8);
}
.htrack {
    flex: 1;
}
.hhandle {
    width: 5px;
    background: linear-gradient(to right, #777 30%, #111 30%, #111 60%, #777 60%);
}

/* sheet tabs */
.tabsbar {
    height: 17px;
    flex: none;
    display: flex;
    background-color: #d6d6d6;
}
.tabnav {
    width: 103px;
    flex: none;
    display: flex;
    align-items: center;
    padding-left: 10px;
    gap: 6.500px;
}
.nav {
    width: 10px;
    height: 10px;
    fill: #333;
}
.nav-add {
    margin-left: 6px;
}
.tab {
    width: 57px;
    height: 17px;
    text-align: center;
    line-height: 16px;
    font-size: 11px;
    font-weight: bold;
    background-color: #fbfbfb;
    border: 1px solid #aaa;
    border-top: 0;
}

/* right panel */
.splitter {
    width: 8px;
    flex: none;
    padding-top: 254px;
    background-color: #dcdcdc;
    border-left: 1px solid #fff;
    border-right: 1px solid #aaa;
}
.split-grip {
    height: 72px;
    margin: 0 -1px;
    background-color: #777;
    display: flex;
    align-items: center;
}
.split-grip::after {
    content: "";
    border-left: 5px solid #ccc;
    border-top: 5px solid transparent;
    border-bottom: 5px solid transparent;
    margin-left: 1px;
}
.sidebar {
    width: 39px;
    flex: none;
    display: flex;
    flex-direction: column;
    align-items: center;
    padding-top: 10px;
    background-color: #d6d6d6;
    border-left: 1px solid #fff;
}
.side-ic {
    margin-bottom: 13px;
    flex: none;
}
.side-sep {
    width: 24px;
    height: 1px;
    margin-top: -4px;
    background-color: #c0c0c0;
}
.side-active {
    width: 32px;
    height: 32px;
    margin: 0 0 9px;
    display: flex;
    align-items: center;
    justify-content: center;
    border: 1px solid #c2c2c2;
    border-radius: 4px;
}
.side-fx {
    margin-top: 1px;
}

/* status bar */
.statusbar {
    height: 25px;
    flex: none;
    display: flex;
    align-items: center;
    border-top: 1px solid #999;
    background-color: #d6d6d6;
    font-size: 12px;
}
.st {
    flex: none;
    display: flex;
    align-items: center;
}
.st-sheet {
    width: 567px;
    padding-left: 11px;
}
.st-style {
    width: 273px;
}
.st-icons {
    width: 181px;
    gap: 18px;
    padding-left: 2px;
}
.st-ic {
    width: 12px;
    height: 12px;
}
.st-sum {
    width: 158px;
}
.st-zoom {
    width: 143px;
    gap: 4px;
}
.zm {
    font-size: 15px;
    color: #777;
    width: 9px;
    text-align: center;
}
.slider {
    width: 98px;
    height: 2px;
    margin: 0 1px;
    background-color: #999;
    position: relative;
}
.tick {
    position: absolute;
    left: 48px;
    top: -4px;
    width: 1px;
    height: 10px;
    background-color: #888;
}
.knob {
    position: absolute;
    left: 54px;
    top: -3px;
    width: 8px;
    height: 8px;
    border-radius: 50%;
    background-color: #fff;
    border: 1px solid #888;
}

/* mint panel */
.taskbar {
    height: 28px;
    flex: none;
    display: flex;
    align-items: center;
    padding-left: 4px;
    background: linear-gradient(#3e3e3e, #2c2c2c);
    color: #e2e2e2;
    font-size: 12.500px;
}
.tk {
    flex: none;
    width: 18px;
    height: 18px;
}
.mint {
    width: 71px;
    flex: none;
    display: flex;
    align-items: center;
    gap: 4px;
}
.mint .tk {
    width: 20px;
    height: 20px;
}
.mint span {
    color: #ccc;
}
.tk-desk {
    width: 22px;
    margin-right: 12px;
}
.tk-q {
    margin-right: 6px;
}
.task {
    height: 26px;
    width: 160px;
    flex: none;
    align-self: flex-end;
    margin-left: 3px;
    padding-left: 3px;
    display: flex;
    align-items: center;
    gap: 3px;
    background-color: #3c3c3c;
    border: 1px solid #444;
    border-bottom: 0;
    border-radius: 3px 3px 0 0;
}
.task .tk {
    width: 16px;
    height: 16px;
}
.task-on {
    width: 160px;
    margin-left: 3px;
    padding-left: 2px;
    background: linear-gradient(#626262, #4c4c4c);
    border-color: #666;
}
.tray {
    margin-left: auto;
    display: flex;
    align-items: center;
    padding-right: 3px;
}
.tk-shield {
    width: 16px;
    margin-right: 9px;
}
.tk-flag {
    width: 18px;
    height: 14px;
    margin-right: 8px;
}
.tk-user {
    width: 14px;
    height: 14px;
    margin-right: 6px;
}
.clock {
    font-weight: bold;
    font-size: 13px;
    color: #c8d4e0;
    margin-left: 4px;
    margin-right: 5px;
}
.tk-vol {
    width: 14px;
    height: 14px;
}
```
